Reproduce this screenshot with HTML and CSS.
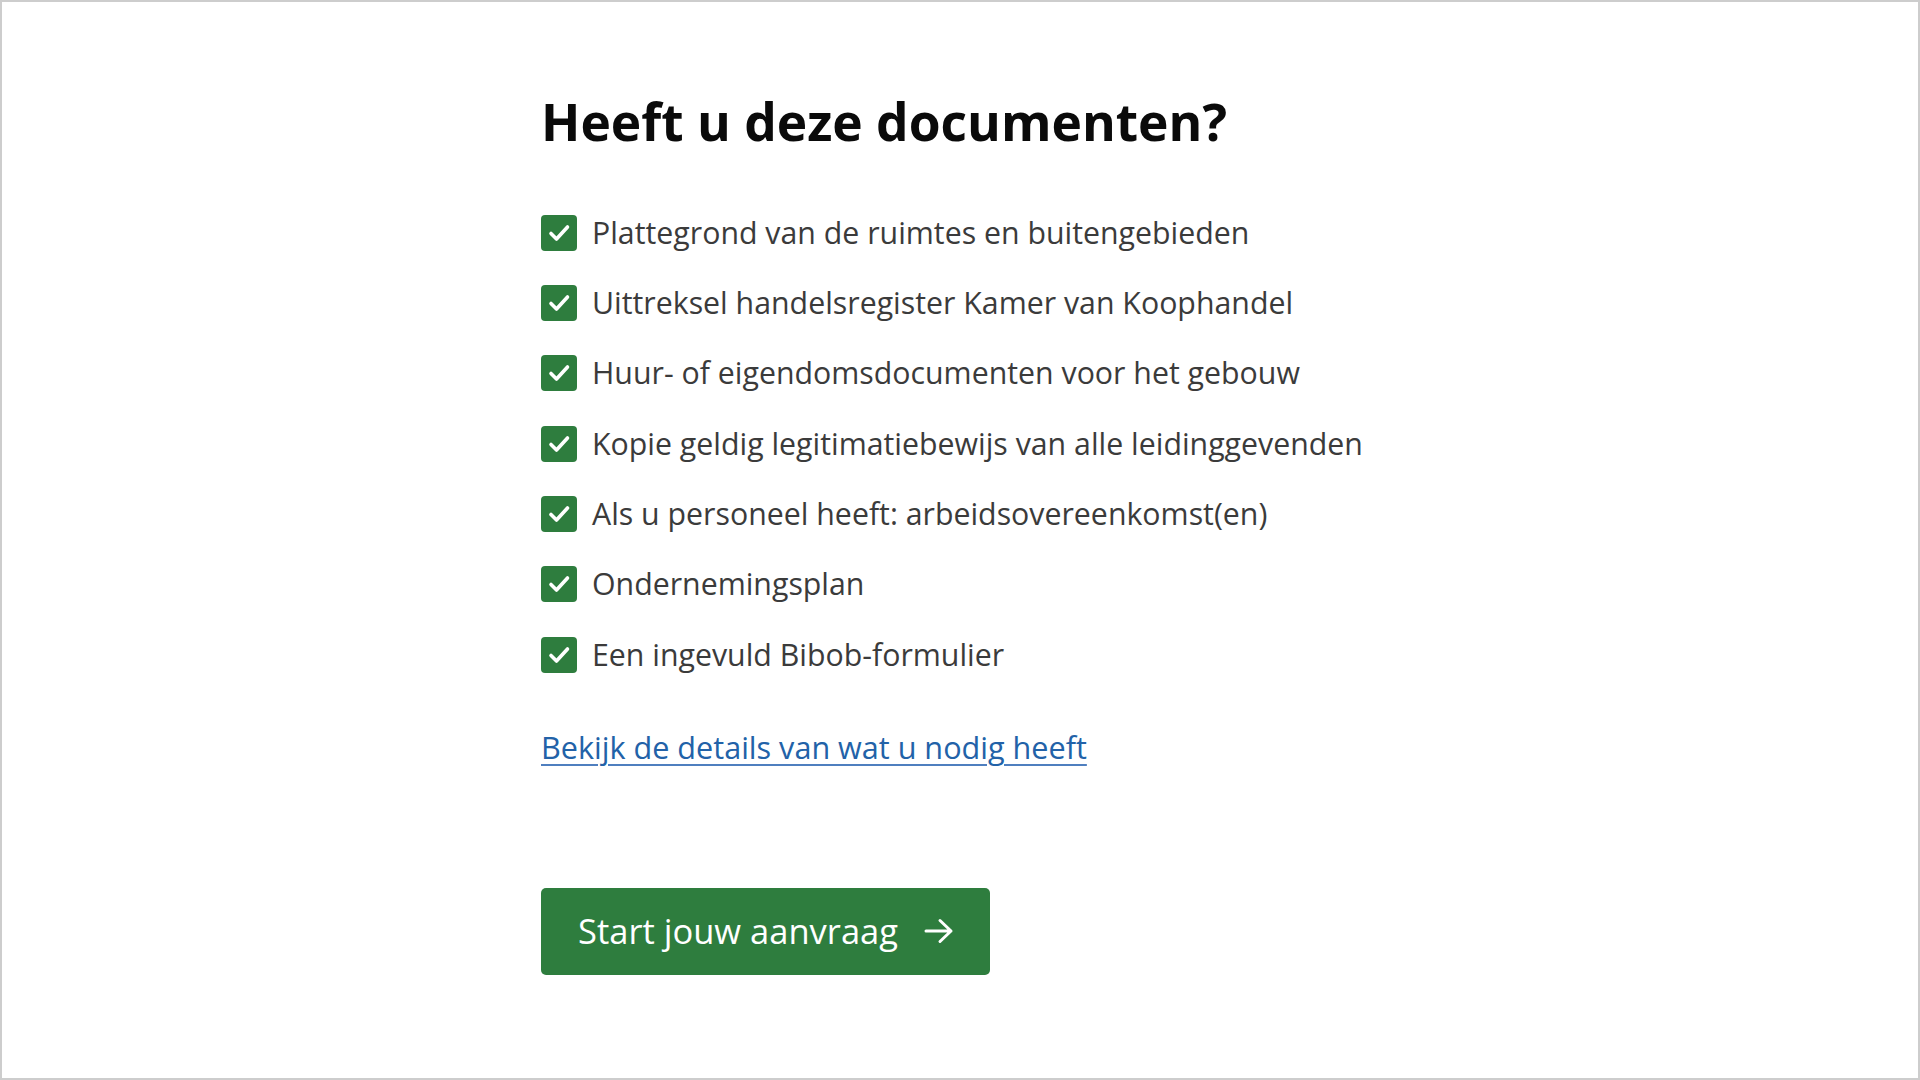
FILE: index.html
```html
<!DOCTYPE html>
<html lang="nl">
<head>
<meta charset="utf-8">
<title>Heeft u deze documenten?</title>
<link rel="stylesheet" href="styles.css">
</head>
<body>
<div class="frame">
  <main class="content">
    <h1 class="title">Heeft u deze documenten?</h1>
    <ul class="checklist">
      <li class="item"><span class="box"><svg viewBox="0 0 36 36" width="36" height="36"><path d="M10 18.5 L15.5 24 L26.5 12" /></svg></span><span class="label">Plattegrond van de ruimtes en buitengebieden</span></li>
      <li class="item"><span class="box"><svg viewBox="0 0 36 36" width="36" height="36"><path d="M10 18.5 L15.5 24 L26.5 12" /></svg></span><span class="label">Uittreksel handelsregister Kamer van Koophandel</span></li>
      <li class="item"><span class="box"><svg viewBox="0 0 36 36" width="36" height="36"><path d="M10 18.5 L15.5 24 L26.5 12" /></svg></span><span class="label">Huur- of eigendomsdocumenten voor het gebouw</span></li>
      <li class="item"><span class="box"><svg viewBox="0 0 36 36" width="36" height="36"><path d="M10 18.5 L15.5 24 L26.5 12" /></svg></span><span class="label">Kopie geldig legitimatiebewijs van alle leidinggevenden</span></li>
      <li class="item"><span class="box"><svg viewBox="0 0 36 36" width="36" height="36"><path d="M10 18.5 L15.5 24 L26.5 12" /></svg></span><span class="label">Als u personeel heeft: arbeidsovereenkomst(en)</span></li>
      <li class="item"><span class="box"><svg viewBox="0 0 36 36" width="36" height="36"><path d="M10 18.5 L15.5 24 L26.5 12" /></svg></span><span class="label">Ondernemingsplan</span></li>
      <li class="item"><span class="box"><svg viewBox="0 0 36 36" width="36" height="36"><path d="M10 18.5 L15.5 24 L26.5 12" /></svg></span><span class="label">Een ingevuld Bibob-formulier</span></li>
    </ul>
    <p class="more"><a class="link" href="#">Bekijk de details van wat u nodig heeft</a></p>
    <a class="button" href="#"><span class="button-text">Start jouw aanvraag</span><svg class="arrow" viewBox="0 0 30 26" width="30" height="26"><path d="M2 13 H27 M16 2.5 L27 13 L16 23.5" /></svg></a>
  </main>
</div>
</body>
</html>
```
FILE: styles.css
```css
html, body {
  margin: 0;
  padding: 0;
  background: #ffffff;
}

.frame {
  box-sizing: border-box;
  width: 1920px;
  height: 1080px;
  border: 2px solid #cdcdcd;
  padding: 89px 0 0 539px;
  font-family: "Open Sans", "Noto Sans", sans-serif;
}

.content {
  display: flex;
  flex-direction: column;
  align-items: flex-start;
}

.title {
  margin: 0;
  font-size: 51.5px;
  line-height: 1.2;
  font-weight: 700;
  color: #0a0a0a;
  letter-spacing: 0;
}

.checklist {
  list-style: none;
  margin: 62px 0 0 0;
  padding: 0;
  display: flex;
  flex-direction: column;
  gap: 34.33px;
}

.item {
  display: flex;
  align-items: center;
  gap: 15px;
  height: 36px;
}

.box {
  flex: none;
  width: 36px;
  height: 36px;
  border-radius: 4px;
  background: #2e7d3e;
  display: block;
}

.box svg {
  display: block;
}

.box path {
  fill: none;
  stroke: #ffffff;
  stroke-width: 3.6;
  stroke-linecap: round;
  stroke-linejoin: round;
}

.label {
  font-size: 30.3px;
  line-height: 1.4;
  color: #3b3b3b;
  white-space: nowrap;
}

.more {
  margin: 52px 0 0 0;
  font-size: 30.6px;
  line-height: 1.5;
}

.link {
  color: #2262a8;
  text-decoration: underline;
  text-decoration-color: #4f7fbf;
  text-decoration-thickness: 2px;
  text-underline-offset: 5px;
}

.button {
  margin-top: 117px;
  display: inline-flex;
  align-items: center;
  box-sizing: border-box;
  height: 87px;
  padding: 0 36px 0 37px;
  gap: 26px;
  background: #2e7d3e;
  border-radius: 5px;
  color: #ffffff;
  text-decoration: none;
}

.button-text {
  font-size: 34.5px;
  line-height: 1;
  white-space: nowrap;
}

.arrow {
  display: block;
  flex: none;
}

.arrow path {
  fill: none;
  stroke: #ffffff;
  stroke-width: 3;
  stroke-linecap: round;
  stroke-linejoin: round;
}
```
